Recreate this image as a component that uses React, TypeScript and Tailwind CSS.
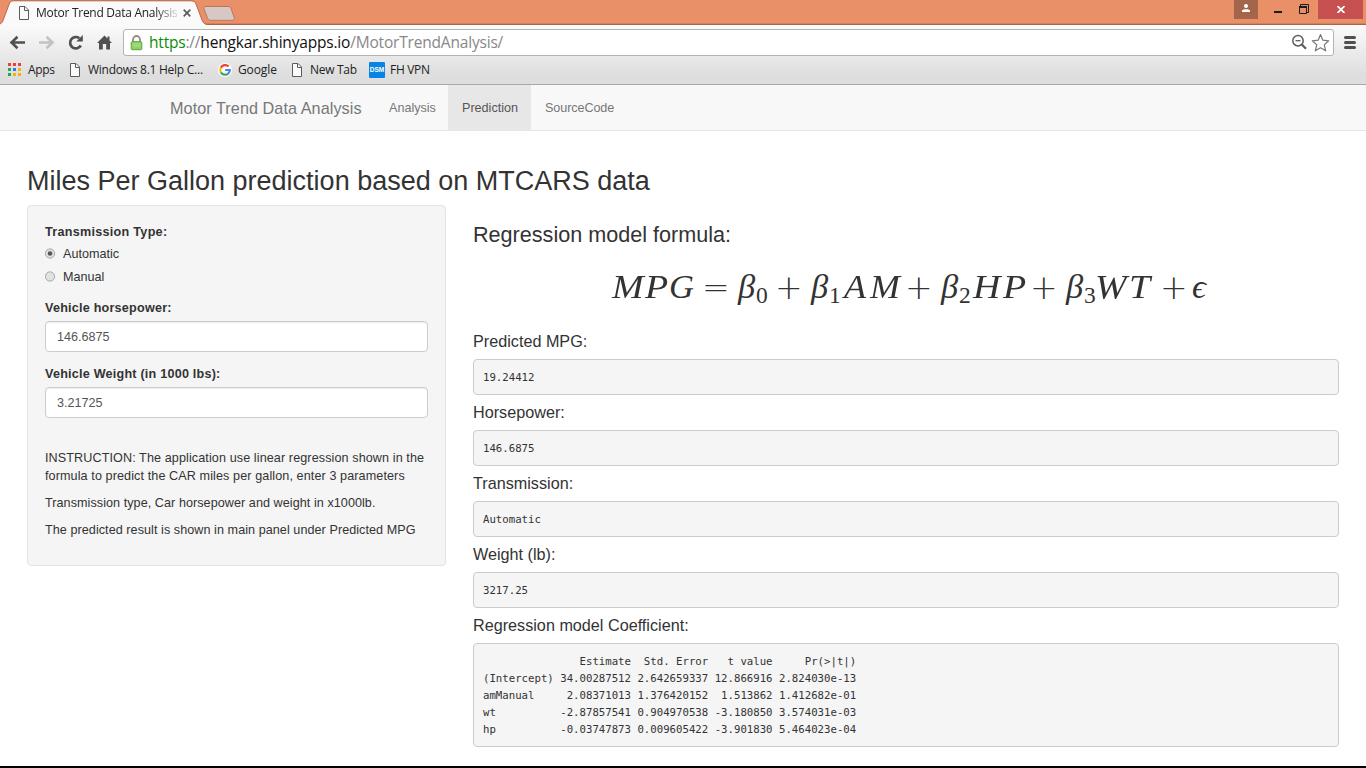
import React from "react";

const FileIcon = () => (
  <svg width="10" height="14" viewBox="0 0 10 14" className="block shrink-0">
    <path d="M0.5 0.5H6L9.5 4V13.5H0.5Z" fill="#fafafa" stroke="#5c5c5c" />
    <path d="M5.5 0.5V4.5H9.5" fill="none" stroke="#5c5c5c" />
  </svg>
);

const AppsIcon = () => {
  const colors = ["#ea4335", "#ea4335", "#ea4335", "#2ba24c", "#2a7de1", "#f4b400", "#2ba24c", "#f4b400", "#f4b400"];
  return (
    <svg width="13" height="13" viewBox="0 0 13 13" className="relative -top-px block shrink-0" shapeRendering="crispEdges">
      {colors.map((c, i) => (
        <rect key={i} x={(i % 3) * 5} y={Math.floor(i / 3) * 5} width="3" height="3" fill={c} />
      ))}
    </svg>
  );
};

const GoogleIcon = () => (
  <svg width="14" height="14" viewBox="0 0 14 14" className="block shrink-0">
    <circle cx="7" cy="7" r="7" fill="#fff" />
    <g fill="none" strokeWidth="2.2">
      <path d="M10.6 3.4A4.9 4.9 0 0 0 2.8 4.8" stroke="#ea4335" />
      <path d="M2.8 4.7A4.9 4.9 0 0 0 2.8 9.3" stroke="#fbbc05" />
      <path d="M2.8 9.2A4.9 4.9 0 0 0 10.2 10.6" stroke="#34a853" />
      <path d="M7.2 7H11.8A4.9 4.9 0 0 1 10.2 10.6" stroke="#4285f4" />
    </g>
  </svg>
);

function TabStrip() {
  return (
    <div className="relative flex h-[25px] shrink-0 bg-[#e99069]">
      <svg className="absolute left-0 top-0" width="1366" height="25" viewBox="0 0 1366 25">
        <path d="M0 24.5H1366" stroke="#ab6345" />
        <path d="M0 23.5H1366" stroke="#d67f5b" />
        <path d="M0 25V24C2 23 2.5 22 3.2 20L9 4.5C9.9 2 11 1 13 1H191C194 1 195.2 2 196 4L202 20C203 23 205 24.5 208 25Z" fill="#fafafa" />
        <path d="M0 24C2 23 2.5 22 3.2 20L9 4.5C9.9 2 11 .8 13 .8H191C194 .8 195.2 2 196 4L202 20C203 23 205 24.5 208 24.5" fill="none" stroke="#b8694a" />
        <path d="M206 6.5H228C230 6.5 230.5 7 231.2 9L234 17C234.8 19.5 234.5 20.3 232 20.3H211C209 20.3 208 19.5 207.3 17.5L204 9C203.4 7 204 6.5 206 6.5Z" fill="#d7c8c6" stroke="#b77760" />
      </svg>
      <div className="relative flex h-[25px] w-[204px] items-center pl-[19px]">
        <FileIcon />
        <span className="ml-[7px] w-[141px] whitespace-nowrap text-[12px] leading-[24px] tracking-[-0.27px] text-[#222] [mask-image:linear-gradient(to_right,#000_84%,rgba(0,0,0,0.15))]">
          Motor Trend Data Analysis
        </span>
        <svg width="8" height="8" viewBox="0 0 8 8" className="ml-[6px] block">
          <path d="M.7.7L7.3 7.3M7.3.7L.7 7.3" stroke="#5a5a5a" strokeWidth="1.7" />
        </svg>
      </div>
      <div className="relative ml-auto flex h-[19px] pr-[3px]">
        <div className="flex w-6 justify-center bg-[#a3664a]">
          <svg width="10" height="9" viewBox="0 0 10 9" className="mt-[4px] block">
            <circle cx="5" cy="2" r="2" fill="#fff" />
            <path d="M1 8V6.5C2 4.8 8 4.8 9 6.5V8Z" fill="#fff" />
          </svg>
        </div>
        <svg width="60" height="19" viewBox="0 0 60 19" className="block">
          <rect x="16" y="11" width="8" height="2" fill="#1c1c1c" />
          <path d="M42.5 6V4.5H50.5V12.5H49M41.5 6.5H48.5V13.5H41.5Z" stroke="#1c1c1c" fill="none" />
          <path d="M41 7H49" stroke="#1c1c1c" strokeWidth="2" />
        </svg>
        <div className="flex w-[45px] items-center justify-center bg-[#c75050]">
          <svg width="8" height="7" viewBox="0 0 8 7" className="block">
            <path d="M.5 0L7.5 7M7.5 0L.5 7" stroke="#fff" strokeWidth="1.8" />
          </svg>
        </div>
      </div>
    </div>
  );
}

function Toolbar() {
  return (
    <div className="flex h-[34px] shrink-0 items-start pt-[4px]">
      <svg width="123" height="28" viewBox="0 0 123 28" className="block shrink-0">
        <path d="M25 13.5H12M17.5 7.8L11.5 13.5L17.5 19.2" fill="none" stroke="#505050" strokeWidth="2.6" />
        <path d="M39 13.5H52M46.5 7.8L52.5 13.5L46.5 19.2" fill="none" stroke="#c2c2c2" strokeWidth="2.6" />
        <path d="M80.8 16.5A5.7 5.7 0 1 1 79.3 9.2" fill="none" stroke="#505050" strokeWidth="2.7" />
        <path d="M82.8 6V12.5H76.3Z" fill="#505050" />
        <path d="M97 14L104.5 6.5L107.5 9.5V7.5H109.5V11.5L112 14H110V20.5H106.2V15H102.8V20.5H99V14Z" fill="#505050" />
      </svg>
      <div className="flex h-[27px] w-[1211px] items-center rounded-[3px] border border-[#b3b3b3] bg-white">
        <svg width="13" height="16" viewBox="0 0 13 16" className="ml-[6px] block">
          <path d="M3 8V4.5A3.5 3.5 0 0 1 10 4.5V8" fill="none" stroke="#8d8d8d" strokeWidth="1.8" />
          <rect x="1.2" y="6.7" width="10.6" height="8" rx="1" fill="#8ed067" stroke="#5aa63a" />
          <path d="M2.5 9H10.5M2.5 11H10.5" stroke="#aee08e" />
        </svg>
        <span className="ml-[6px] whitespace-nowrap text-[15.5px] leading-[25px] tracking-[-0.19px] text-[#888]">
          <span className="text-[#0b8c0b]">https</span>://<span className="text-[#111]">hengkar.shinyapps.io</span>/MotorTrendAnalysis/
        </span>
        <svg width="42" height="20" viewBox="0 0 42 20" className="ml-auto block">
          <circle cx="7" cy="7.7" r="5.2" fill="none" stroke="#5c5c5c" strokeWidth="1.5" />
          <path d="M4.5 7.7H9.5" stroke="#5c5c5c" strokeWidth="1.3" />
          <path d="M10.8 11.5L15 15.7" stroke="#5c5c5c" strokeWidth="2.3" />
          <path d="M29.5 1.5L31.8 7.2L37.7 7.8L33.2 11.9L34.7 17.8L29.5 14.8L24.3 17.8L25.8 11.9L21.3 7.8L27.2 7.2Z" fill="#fff" stroke="#777" strokeWidth="1.2" strokeLinejoin="round" />
        </svg>
      </div>
      <svg width="14" height="15" viewBox="0 0 14 15" className="ml-[9px] mt-[6px] block">
        <path d="M2.5 2.5H11.5M2.5 7.5H11.5M2.5 12.5H11.5" stroke="#505050" strokeWidth="3" strokeLinecap="round" />
      </svg>
    </div>
  );
}

function Bookmarks() {
  return (
    <div className="flex h-[25px] shrink-0 items-start whitespace-nowrap text-[12px] leading-[22px] text-[#222]">
      <div className="flex h-[22px] w-[70px] items-center pl-2">
        <AppsIcon />
        <span className="ml-[7px] tracking-[-0.35px]">Apps</span>
      </div>
      <div className="flex h-[22px] w-[148px] items-center">
        <FileIcon />
        <span className="ml-2 tracking-[-0.26px]">Windows 8.1 Help C...</span>
      </div>
      <div className="flex h-[22px] w-[74px] items-center">
        <GoogleIcon />
        <span className="ml-[6px] tracking-[-0.1px]">Google</span>
      </div>
      <div className="flex h-[22px] w-[77px] items-center">
        <FileIcon />
        <span className="ml-2 tracking-[-0.3px]">New Tab</span>
      </div>
      <div className="flex h-[22px] items-center">
        <div className="flex h-4 w-4 items-center justify-center rounded-[1px] bg-[#0a84e4] font-['Liberation_Sans',sans-serif] text-[6.5px] font-bold leading-none text-white">
          DSM
        </div>
        <span className="ml-[5px] tracking-[-0.3px]">FH VPN</span>
      </div>
    </div>
  );
}

function Navbar() {
  return (
    <nav className="flex h-[46px] shrink-0 border-b border-[#e7e7e7] bg-[#f8f8f8] pl-[170px] text-[12.6px] leading-[46px] text-[#777]">
      <span className="w-[205px] whitespace-nowrap text-[16.2px] leading-[46px] tracking-[0.07px]">Motor Trend Data Analysis</span>
      <span className="w-[73px] pl-[14px]">Analysis</span>
      <span className="h-[45px] w-[83px] bg-[#e7e7e7] pl-[14px] text-[#555]">Prediction</span>
      <span className="pl-[14px] tracking-[-0.08px]">SourceCode</span>
    </nav>
  );
}

function Radio({ label, checked }: { label: string; checked?: boolean }) {
  return (
    <label className="flex h-[23px] items-center">
      <svg width="11" height="11" viewBox="0 0 11 11" className="block">
        <circle cx="5" cy="5.5" r="4.6" fill="#e2e2e2" stroke="#a6a6a6" />
        {checked && <circle cx="5" cy="5.5" r="2.3" fill="#555" />}
      </svg>
      <span className="ml-[7px]">{label}</span>
    </label>
  );
}

function Field({ label, value }: { label: string; value: string }) {
  return (
    <div className="h-[66px]">
      <div className="h-[23px] pt-px font-bold leading-[18px] tracking-[0.22px]">{label}</div>
      <div className="flex h-[31px] items-center rounded-[4px] border border-[#ccc] bg-white pl-[11px] text-[#555] shadow-[inset_0_1px_1px_rgba(0,0,0,0.075)]">
        {value}
      </div>
    </div>
  );
}

function Sidebar() {
  return (
    <aside className="h-[361px] w-[419px] shrink-0 rounded-[4px] border border-[#e3e3e3] bg-[#f5f5f5] px-[17px] pt-[17px] leading-[18px]">
      <div className="h-[19px] font-bold tracking-[0.28px]">Transmission Type:</div>
      <Radio label="Automatic" checked />
      <Radio label="Manual" />
      <div className="h-[10px]" />
      <Field label="Vehicle horsepower:" value="146.6875" />
      <Field label="Vehicle Weight (in 1000 lbs):" value="3.21725" />
      <div className="flex flex-col gap-[9px] whitespace-nowrap pt-[19px] tracking-[0.06px]">
        <p className="tracking-[0.1px]">
          INSTRUCTION: The application use linear regression shown in the
          <br />
          formula to predict the CAR miles per gallon, enter 3 parameters
        </p>
        <p>Transmission type, Car horsepower and weight in x1000lb.</p>
        <p>The predicted result is shown in main panel under Predicted MPG</p>
      </div>
    </aside>
  );
}

const WIDE = "shrink-0 origin-left italic scale-x-[1.1]";
const VAR = "shrink-0 origin-left italic";
const OP = "relative top-px shrink-0 text-[33px] font-extralight font-['DejaVu_Sans',sans-serif]";
const SUB = "relative top-[5px] shrink-0 text-[23.5px]";
const formula: [string, string][] = [
  ["M", WIDE + " w-[33px]"],
  ["P", WIDE + " w-[24px]"],
  ["G", VAR + " w-[33px]"],
  ["=", OP + " w-[36px]"],
  ["β", VAR + " w-[18px]"],
  ["0", SUB + " w-[19px]"],
  ["+", OP + " w-[36px]"],
  ["β", VAR + " w-[18px]"],
  ["1", SUB + " w-[15px]"],
  ["A", VAR + " scale-x-[1.05] w-[26px]"],
  ["M", VAR + " scale-x-[1.04] w-[35px]"],
  ["+", OP + " w-[36px]"],
  ["β", VAR + " w-[18px]"],
  ["2", SUB + " w-[14px]"],
  ["H", WIDE + " w-[30px]"],
  ["P", WIDE + " w-[27px]"],
  ["+", OP + " w-[36px]"],
  ["β", VAR + " w-[18px]"],
  ["3", SUB + " w-[11px]"],
  ["W", WIDE + " w-[34px]"],
  ["T", WIDE + " w-[31px]"],
  ["+", OP + " w-[32px]"],
  ["ϵ", VAR + " w-[14px]"],
];

function Formula() {
  return (
    <div className="flex h-[84px] items-baseline pl-[139px] pt-[18px] font-['Liberation_Serif','DejaVu_Serif',serif] text-[34.5px] leading-[40px]">
      {formula.map(([t, c], i) => (
        <span key={i} className={c}>{t}</span>
      ))}
    </div>
  );
}

const PRE =
  "rounded-[4px] border border-[#ccc] bg-[#f5f5f5] px-[9px] font-['DejaVu_Sans_Mono',monospace] text-[10.69px] leading-[17px]";

function Output({ label, value }: { label: string; value: string }) {
  return (
    <div className="h-[71px]">
      <h4 className="h-[27px] text-[16.2px] leading-[18px]">{label}</h4>
      <pre className={PRE + " h-[36px] pt-[9px]"}>{value}</pre>
    </div>
  );
}

const coefficients = `               Estimate  Std. Error   t value     Pr(>|t|)
(Intercept) 34.00287512 2.642659337 12.866916 2.824030e-13
amManual     2.08371013 1.376420152  1.513862 1.412682e-01
wt          -2.87857541 0.904970538 -3.180850 3.574031e-03
hp          -0.03747873 0.009605422 -3.901830 5.464023e-04`;

function MainPanel() {
  return (
    <main className="w-[866px] pt-[17px]">
      <h3 className="h-[26px] pt-px text-[21.6px] leading-[24px]">Regression model formula:</h3>
      <Formula />
      <Output label="Predicted MPG:" value="19.24412" />
      <Output label="Horsepower:" value="146.6875" />
      <Output label="Transmission:" value="Automatic" />
      <Output label="Weight (lb):" value="3217.25" />
      <h4 className="h-[27px] text-[16.2px] leading-[18px]">Regression model Coefficient:</h4>
      <pre className={PRE + " h-[104px] pt-[9px]"}>{coefficients}</pre>
    </main>
  );
}

export default function App() {
  return (
    <div className="flex h-[768px] w-[1366px] flex-col overflow-hidden border-b-2 border-black bg-white font-['Liberation_Sans',Arial,sans-serif] text-[12.6px] text-[#333]">
      <header className="flex h-[85px] shrink-0 flex-col border-b border-[#a8a8a8] bg-linear-to-b from-[#fafafa] from-30% to-[#dedede] to-90% font-['Open_Sans','Noto_Sans',sans-serif]">
        <TabStrip />
        <Toolbar />
        <Bookmarks />
      </header>
      <Navbar />
      <div className="px-[27px] pt-[33px]">
        <h2 className="h-[41px] whitespace-nowrap text-[27px] leading-[34px]">Miles Per Gallon prediction based on MTCARS data</h2>
        <div className="flex gap-[27px]">
          <Sidebar />
          <MainPanel />
        </div>
      </div>
    </div>
  );
}
